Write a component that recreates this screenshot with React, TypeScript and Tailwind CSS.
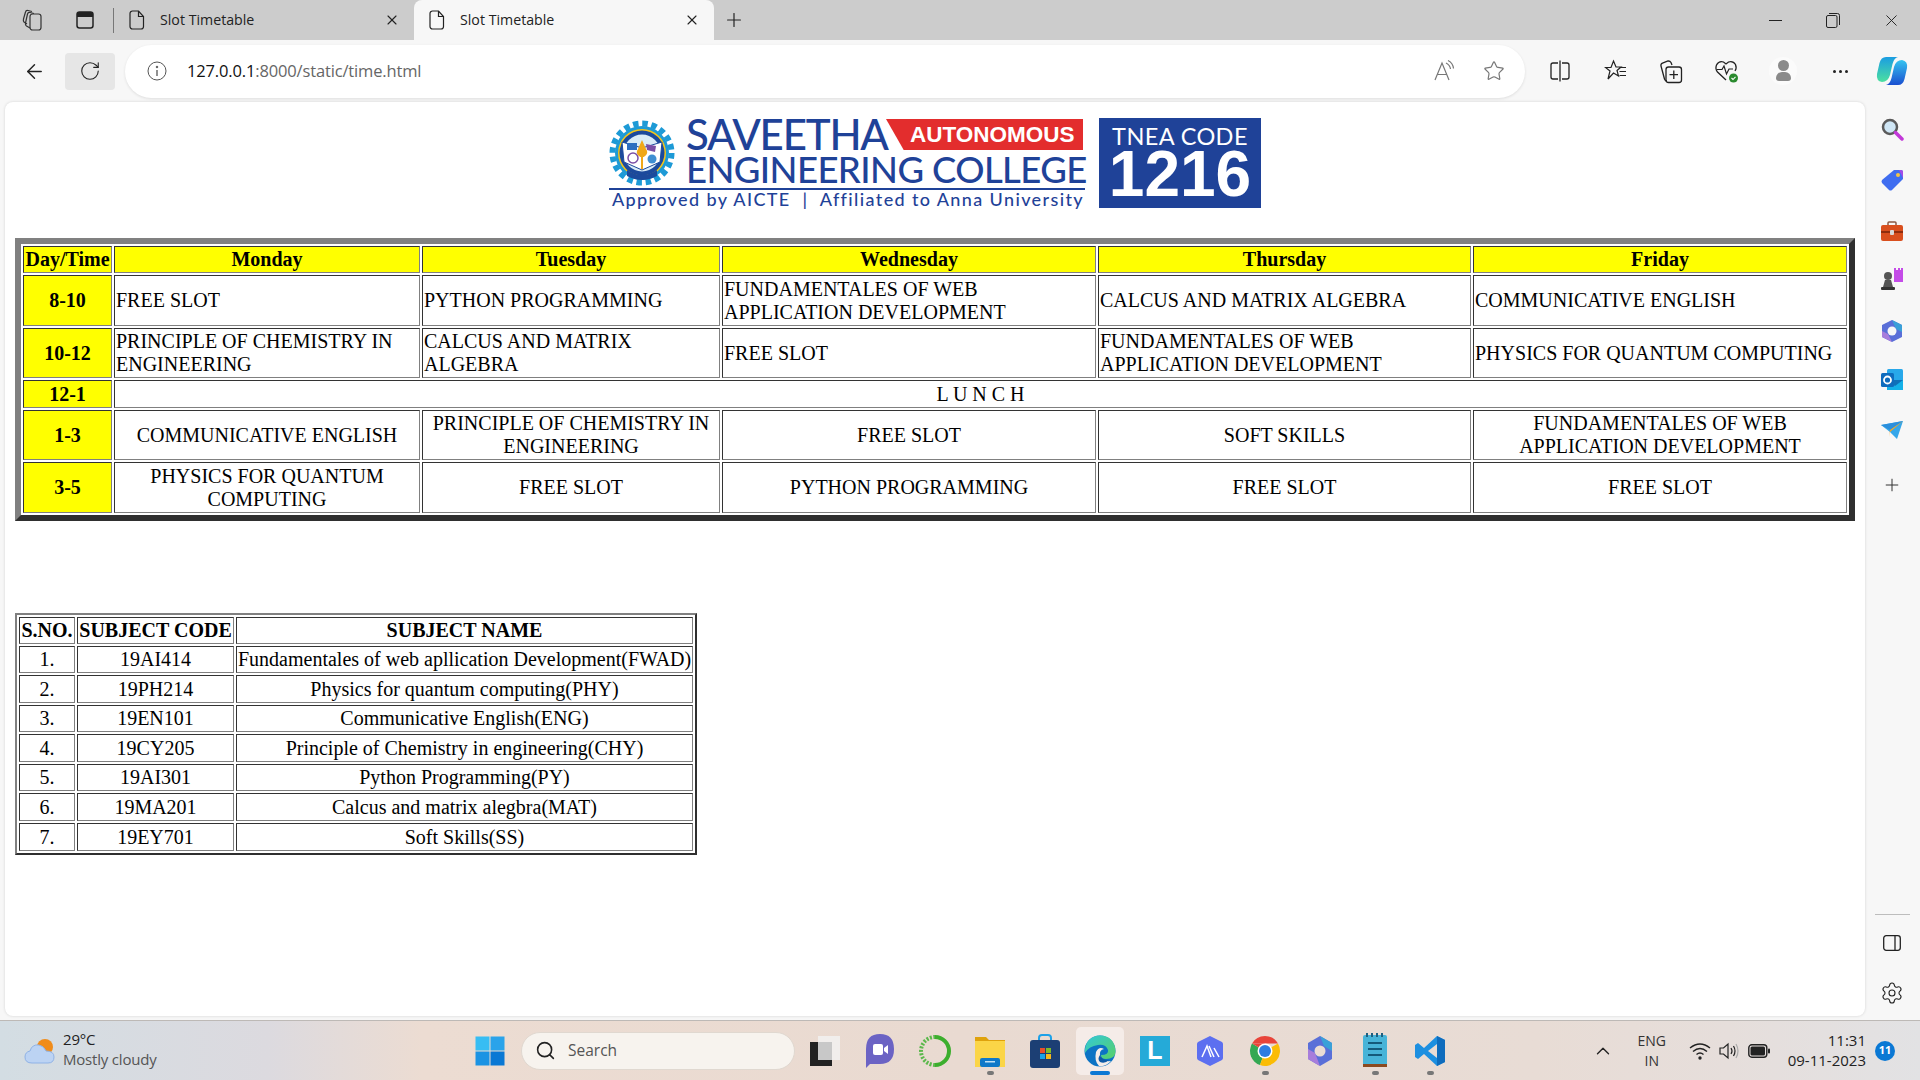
import { ArrowLeft, ChevronUp, Plus, RotateCw, Search, Settings, Star, X } from 'lucide-react';

const serif = "font-['Liberation_Serif','Times_New_Roman',serif]";
const ui = "font-['Open_Sans','Noto_Sans',sans-serif]";

interface Cell {
  text: string;
  align?: 'left' | 'center';
}

const timetable: { slot: string; height: string; cells: Cell[] }[] = [
  {
    slot: '8-10',
    height: 'h-[51px]',
    cells: [
      { text: 'FREE SLOT', align: 'left' },
      { text: 'PYTHON PROGRAMMING', align: 'left' },
      { text: 'FUNDAMENTALES OF WEB APPLICATION DEVELOPMENT', align: 'left' },
      { text: 'CALCUS AND MATRIX ALGEBRA', align: 'left' },
      { text: 'COMMUNICATIVE ENGLISH', align: 'left' },
    ],
  },
  {
    slot: '10-12',
    height: 'h-[50px]',
    cells: [
      { text: 'PRINCIPLE OF CHEMISTRY IN ENGINEERING', align: 'left' },
      { text: 'CALCUS AND MATRIX ALGEBRA', align: 'left' },
      { text: 'FREE SLOT', align: 'left' },
      { text: 'FUNDAMENTALES OF WEB APPLICATION DEVELOPMENT', align: 'left' },
      { text: 'PHYSICS FOR QUANTUM COMPUTING', align: 'left' },
    ],
  },
  {
    slot: '1-3',
    height: 'h-[50px]',
    cells: [
      { text: 'COMMUNICATIVE ENGLISH' },
      { text: 'PRINCIPLE OF CHEMISTRY IN ENGINEERING' },
      { text: 'FREE SLOT' },
      { text: 'SOFT SKILLS' },
      { text: 'FUNDAMENTALES OF WEB APPLICATION DEVELOPMENT' },
    ],
  },
  {
    slot: '3-5',
    height: 'h-[51px]',
    cells: [
      { text: 'PHYSICS FOR QUANTUM COMPUTING' },
      { text: 'FREE SLOT' },
      { text: 'PYTHON PROGRAMMING' },
      { text: 'FREE SLOT' },
      { text: 'FREE SLOT' },
    ],
  },
];

const subjects = [
  ['1.', '19AI414', 'Fundamentales of web apllication Development(FWAD)', 'h-[27px]'],
  ['2.', '19PH214', 'Physics for quantum computing(PHY)', 'h-[28px]'],
  ['3.', '19EN101', 'Communicative English(ENG)', 'h-[27px]'],
  ['4.', '19CY205', 'Principle of Chemistry in engineering(CHY)', 'h-[28px]'],
  ['5.', '19AI301', 'Python Programming(PY)', 'h-[27px]'],
  ['6.', '19MA201', 'Calcus and matrix alegbra(MAT)', 'h-[28px]'],
  ['7.', '19EY701', 'Soft Skills(SS)', 'h-[28px]'],
];

const cellBorder = 'border border-t-[#333333] border-l-[#333333] border-r-[#808080] border-b-[#808080] p-[1px]';

function DocIcon() {
  return (
    <svg width="16" height="20" viewBox="0 0 16 20" fill="none" stroke="#222" strokeWidth="1.2">
      <path d="M3.5 1h6l5 5.500V16.500a2.500 2.500 0 0 1-2.500 2.500h-8.500A2.500 2.500 0 0 1 1 16.500V3.500A2.500 2.500 0 0 1 3.500 1z" />
      <path d="M9.500 1v5.500h5" />
    </svg>
  );
}

function Tab({ active }: { active?: boolean }) {
  return (
    <div className={`flex h-10 w-[300px] items-center rounded-t-lg pl-[15px] pr-[14px] ${active ? 'bg-[#f7f7f7]' : ''}`}>
      <DocIcon />
      <span className="ml-[15px] text-[14.200px] text-[#222]">Slot Timetable</span>
      <X className="ml-auto" size={16} color="#222" strokeWidth={1.700} />
    </div>
  );
}

function Emblem() {
  return (
    <svg width="66" height="66" viewBox="0 0 66 66" className="shrink-0">
      <circle cx="33" cy="33" r="27" fill="#1d9ad6" />
      <circle cx="33" cy="33" r="29.500" fill="none" stroke="#1d9ad6" strokeWidth="6" strokeDasharray="5.500 3.770" />
      <circle cx="33" cy="33" r="24" fill="#f5c518" />
      <circle cx="33" cy="33" r="22.500" fill="#1c4a9c" />
      <circle cx="33" cy="33" r="18.500" fill="#d9ecf7" />
      <path d="M13 22 L33 28 L53 22 L51 42 L33 50 L15 42 Z" fill="#fff" stroke="#1c4a9c" strokeWidth="1" />
      <rect x="18" y="23" width="10" height="7" fill="#2d6fc0" />
      <path d="M37 24 L47 26 L46 32 L38 30 Z" fill="#7a4fa5" />
      <circle cx="24" cy="38" r="5" fill="none" stroke="#7a4fa5" strokeWidth="1.500" />
      <circle cx="43" cy="39" r="4.500" fill="#3f8fd2" />
      <path d="M33 20 L37 29 A5 5 0 1 1 29 29 Z" fill="#f0a818" />
      <rect x="32" y="34" width="2" height="15" fill="#f0a818" />
      <path d="M18 50 Q33 60 48 50 L48 56 Q33 64 18 56 Z" fill="#1c4a9c" />
    </svg>
  );
}

function Logo() {
  return (
    <div className="flex justify-center pt-4">
      <div className="flex h-[90px] w-[476px] flex-col">
        <div className="flex h-[70px] items-start">
          <div className="pt-[2px]">
            <Emblem />
          </div>
          <div className="ml-[11px] flex w-[397px] flex-col">
            <div className="flex h-[37px] items-start">
              <span className="h-[37px] w-[200px] font-['Lato',sans-serif] text-[42px] leading-[33px] font-medium tracking-[-1.200px] whitespace-nowrap text-[#1f4298]">
                SAVEETHA
              </span>
              <div className="mt-[1px] h-[31px] w-[197px] bg-[#e32d2d] pl-[24px] [clip-path:polygon(0_0,100%_0,100%_100%,9%_100%)]">
                <span className="font-['Liberation_Sans',sans-serif] text-[22.500px] leading-[31px] font-bold text-white">
                  AUTONOMOUS
                </span>
              </div>
            </div>
            <span className="font-['Lato',sans-serif] text-[36.500px] leading-[28px] font-medium tracking-[-0.600px] whitespace-nowrap text-[#1f4298]">
              ENGINEERING COLLEGE
            </span>
          </div>
        </div>
        <div className="h-[2px] bg-[#1f4298]" />
        <div className="mt-[1px] pl-[3px] font-['Lato',sans-serif] text-[18px] leading-[17px] font-medium tracking-[1.380px] whitespace-nowrap text-[#1f4298]">
          Approved by AICTE&nbsp; | &nbsp;Affiliated to Anna University
        </div>
      </div>
      <div className="ml-[14px] flex h-[90px] w-[162px] flex-col items-center bg-[#1f4298] text-white">
        <span className="mt-[5px] font-['Lato',sans-serif] text-[23.500px] leading-[26px] tracking-[0.4px] whitespace-nowrap">TNEA CODE</span>
        <span className="font-['Liberation_Sans',sans-serif] text-[64px] leading-[50px] font-bold">1216</span>
      </div>
    </div>
  );
}

function Timetable() {
  const heads = ['Monday', 'Tuesday', 'Wednesday', 'Thursday', 'Friday'];
  return (
    <table className={`ml-[10px] mt-[30px] w-[1840px] table-fixed border-separate border-spacing-[2px] border-[6px] border-t-[#808080] border-l-[#808080] border-r-[#2f2f2f] border-b-[#2f2f2f] text-[20px] leading-[23px] text-black ${serif}`}>
      <colgroup>
        <col className="w-[89px]" />
        <col className="w-[306px]" />
        <col className="w-[298px]" />
        <col className="w-[374px]" />
        <col className="w-[373px]" />
        <col className="w-[374px]" />
      </colgroup>
      <tbody>
        <tr className="h-[27px]">
          <th className={`${cellBorder} bg-[#ffff00] font-bold whitespace-nowrap`}>Day/Time</th>
          {heads.map((h) => (
            <th key={h} className={`${cellBorder} bg-[#ffff00] font-bold`}>
              {h}
            </th>
          ))}
        </tr>
        {timetable.slice(0, 2).map((row) => (
          <Row key={row.slot} slot={row.slot} height={row.height} cells={row.cells} />
        ))}
        <tr className="h-[28px]">
          <th className={`${cellBorder} bg-[#ffff00] font-bold`}>12-1</th>
          <td colSpan={5} className={`${cellBorder} text-center`}>
            L U N C H
          </td>
        </tr>
        {timetable.slice(2).map((row) => (
          <Row key={row.slot} slot={row.slot} height={row.height} cells={row.cells} />
        ))}
      </tbody>
    </table>
  );
}

function Row({ slot, height, cells }: { slot: string; height: string; cells: Cell[] }) {
  return (
    <tr className={height}>
      <th className={`${cellBorder} bg-[#ffff00] font-bold`}>{slot}</th>
      {cells.map((c, i) => (
        <td key={i} className={`${cellBorder} ${c.align === 'left' ? 'text-left' : 'text-center'}`}>
          {c.text}
        </td>
      ))}
    </tr>
  );
}

function SubjectTable() {
  return (
    <table className={`ml-[10px] mt-[92px] w-[682px] table-fixed border-separate border-spacing-[2px] border-2 border-t-[#808080] border-l-[#808080] border-r-[#2f2f2f] border-b-[#2f2f2f] text-[20px] leading-[23px] text-black ${serif}`}>
      <colgroup>
        <col className="w-[56px]" />
        <col className="w-[157px]" />
        <col className="w-[457px]" />
      </colgroup>
      <tbody>
        <tr className="h-[27px]">
          <th className={`${cellBorder} font-bold whitespace-nowrap`}>S.NO.</th>
          <th className={`${cellBorder} font-bold whitespace-nowrap`}>SUBJECT CODE</th>
          <th className={`${cellBorder} font-bold`}>SUBJECT NAME</th>
        </tr>
        {subjects.map(([no, code, name, height]) => (
          <tr key={no} className={height}>
            <td className={`${cellBorder} text-center`}>{no}</td>
            <td className={`${cellBorder} text-center`}>{code}</td>
            <td className={`${cellBorder} text-center whitespace-nowrap`}>{name}</td>
          </tr>
        ))}
      </tbody>
    </table>
  );
}

function TabStrip() {
  return (
    <div className={`flex h-10 items-center bg-[#cccccc] ${ui}`}>
      <div className="flex w-[66px] justify-center">
        <svg width="22" height="24" viewBox="0 0 22 24" fill="none" stroke="#333" strokeWidth="1.200">
          <rect x="8" y="6" width="11" height="16" rx="2.500" />
          <path d="M8 20 L4.500 18 Q3 17 3.500 15 L5.500 6 Q6 4 8 4.500 L12 5.500" />
          <path d="M5 16 L2 14 Q1 13 1.500 11 L3.500 4 Q4 2 6 2.500 L10 3.500" />
        </svg>
      </div>
      <div className="flex w-[38px] justify-center">
        <svg width="18" height="18" viewBox="0 0 18 18" fill="none">
          <rect x="1" y="1" width="16" height="16" rx="2.500" stroke="#222" strokeWidth="1.500" />
          <path d="M1 3.500 A2.500 2.500 0 0 1 3.500 1 H14.500 A2.500 2.500 0 0 1 17 3.500 V6 H1 Z" fill="#222" />
        </svg>
      </div>
      <div className="ml-[9px] h-[25px] w-px bg-[#777]" />
      <Tab />
      <Tab active />
      <div className="ml-[9px]">
        <Plus size={22} color="#222" strokeWidth={1.300} />
      </div>
      <div className="ml-auto flex items-center">
        <div className="flex w-[58px] justify-center">
          <div className="h-px w-[13px] bg-[#222]" />
        </div>
        <div className="flex w-[58px] justify-center">
          <svg width="14" height="15" viewBox="0 0 14 15" fill="none" stroke="#222" strokeWidth="1">
            <rect x="0.500" y="2.500" width="10.500" height="12" rx="1.500" />
            <path d="M3 0.500 H11.500 A2 2 0 0 1 13.500 2.500 V12" />
          </svg>
        </div>
        <div className="flex w-[58px] justify-center">
          <X size={19} color="#222" strokeWidth={1.200} />
        </div>
      </div>
    </div>
  );
}

function Toolbar() {
  return (
    <div className={`flex h-[62px] items-center bg-[#f7f7f7] ${ui}`}>
      <div className="flex w-[65px] justify-center pl-[3px]">
        <ArrowLeft size={23} color="#222" strokeWidth={1.500} />
      </div>
      <div className="flex h-[37px] w-[50px] items-center justify-center rounded-[4px] bg-[#e6e6e6]">
        <RotateCw size={22} color="#222" strokeWidth={1.200} />
      </div>
      <div className="ml-[10px] flex h-[53px] w-[1400px] items-center rounded-full bg-white pr-[20px] pl-[22px] shadow-[0_1px_3px_rgba(0,0,0,0.1)]">
        <svg width="20" height="20" viewBox="0 0 20 20" fill="none" stroke="#555" strokeWidth="1">
          <circle cx="10" cy="10" r="9" />
          <path d="M10 9 V15" strokeWidth="1.300" />
          <circle cx="10" cy="6" r="0.800" fill="#555" />
        </svg>
        <span className="ml-[20px] text-[16.500px] tracking-[-0.150px] text-[#111]">
          127.0.0.1<span className="text-[#666]">:8000/static/time.html</span>
        </span>
        <div className="ml-auto flex items-center">
          <svg width="24" height="24" viewBox="0 0 24 24" fill="none" stroke="#777" strokeWidth="1.200">
            <path d="M3 21 L10 4 L17 21 M5.500 15.500 H14.500" />
            <path d="M14 4 Q18 6 18.500 10 M16 1.500 Q21 4 21.500 9.500" />
          </svg>
          <Star className="ml-[27px]" size={22} color="#777" strokeWidth={1.300} />
        </div>
      </div>
      <div className="ml-[25px] flex items-center">
        <svg width="20" height="24" viewBox="0 0 20 24" fill="none" stroke="#222" strokeWidth="1.300">
          <path d="M8 4 H3 A2 2 0 0 0 1 6 V18 A2 2 0 0 0 3 20 H8 M12 4 H17 A2 2 0 0 1 19 6 V18 A2 2 0 0 1 17 20 H12 M10 1.500 V22.500" />
        </svg>
        <svg className="ml-[34px]" width="24" height="24" viewBox="0 0 24 24" fill="none" stroke="#222" strokeWidth="1.200">
          <path d="M9.500 2 L12 8 H17 L13 11.500 L14.500 17 L9.500 14 L4 20 L6 12 L1.500 8.500 H7 Z" />
          <path d="M16 8.500 H22 M15.500 12.500 H22 M15.500 16.500 H22" />
        </svg>
        <svg className="ml-[31px]" width="24" height="25" viewBox="0 0 24 25" fill="none" stroke="#222" strokeWidth="1.300">
          <path d="M8 22 Q6 22 5.500 20 L2 7 Q1.500 5 3.500 4.200 L9 2 Q11 1.800 12 3.500 L13 6" />
          <rect x="7" y="8" width="15.500" height="15.500" rx="2.500" />
          <path d="M14.800 11.500 V20 M10.500 15.700 H19" />
        </svg>
        <svg className="ml-[31px]" width="26" height="26" viewBox="0 0 26 26" fill="none">
          <path d="M12 22 L3.500 14 Q1 11 2.500 7 Q5 2.500 9.500 4 L12 6 L14.500 4 Q19 2.500 21.500 6.500 Q23 10 21 13" stroke="#222" strokeWidth="1.300" />
          <path d="M3 11.500 H8 L10 8 L12.500 16 L15 11 H19" stroke="#222" strokeWidth="1.200" />
          <circle cx="19.500" cy="20" r="4.500" fill="#2a8a2e" />
          <path d="M17.500 20 L19 21.500 L21.500 18.800" stroke="#fff" strokeWidth="1.100" />
        </svg>
        <div className="ml-[29px] flex h-[28px] w-[28px] flex-col items-center rounded-full bg-[#fbfbfb]">
          <div className="mt-[3px] h-[11px] w-[11px] rounded-full bg-[#8a8a8a]" />
          <div className="mt-[1px] h-[9px] w-[15px] rounded-t-[6px] rounded-b-[3px] bg-[#8a8a8a]" />
        </div>
        <div className="ml-[36px] flex gap-[3px]">
          <div className="h-[3px] w-[3px] rounded-full bg-[#222]" />
          <div className="h-[3px] w-[3px] rounded-full bg-[#222]" />
          <div className="h-[3px] w-[3px] rounded-full bg-[#222]" />
        </div>
        <svg className="ml-[28px]" width="32" height="32" viewBox="0 0 32 32">
          <defs>
            <linearGradient id="cp1" x1="0" y1="0" x2="0" y2="1">
              <stop offset="0" stopColor="#1b9de2" />
              <stop offset="1" stopColor="#4be0a0" />
            </linearGradient>
            <linearGradient id="cp2" x1="0" y1="0" x2="0" y2="1">
              <stop offset="0" stopColor="#35c4f0" />
              <stop offset="1" stopColor="#1a4fd0" />
            </linearGradient>
          </defs>
          <path d="M10 2 H22 Q18 3 16.500 9 L14 20 Q12 27 6 27 Q0 26 1 19 L3.500 8 Q5 2 10 2 Z" fill="url(#cp1)" />
          <path d="M22 30 H10 Q14 29 15.500 23 L18 12 Q20 5 26 5 Q32 6 31 13 L28.500 24 Q27 30 22 30 Z" fill="url(#cp2)" />
        </svg>
      </div>
    </div>
  );
}

function Sidebar() {
  return (
    <div className="flex w-[55px] flex-col items-center pr-[1px]">
      <svg className="mt-[15px]" width="24" height="24" viewBox="0 0 24 24" fill="none">
        <circle cx="10" cy="10" r="7" fill="#cfe6f5" stroke="#5a5a5a" strokeWidth="2.500" />
        <path d="M15.500 15.500 L22 22" stroke="#c238d8" strokeWidth="3.500" strokeLinecap="round" />
      </svg>
      <svg className="mt-[27px]" width="24" height="24" viewBox="0 0 24 24">
        <path d="M14 2 H21 Q23 2 23 4 V11 L12 22 Q10.500 23 9 22 L2 15 Q1 13.500 2 12 Z" fill="#3f6df0" />
        <path d="M19 2 H21 Q23 2 23 4 V10 Z" fill="#a44be8" />
        <circle cx="18" cy="7" r="2" fill="#f6c445" />
      </svg>
      <svg className="mt-[27px]" width="24" height="24" viewBox="0 0 24 24">
        <path d="M8 7 V4 Q8 3 9 3 H15 Q16 3 16 4 V7" fill="none" stroke="#8b5a44" strokeWidth="1.500" />
        <rect x="1" y="6" width="22" height="16" rx="2" fill="#d94f1e" />
        <rect x="1" y="12" width="22" height="2" fill="#8f2d0e" />
        <rect x="10" y="11" width="4" height="5" rx="1" fill="#d9d9d9" />
      </svg>
      <svg className="mt-[24px]" width="24" height="24" viewBox="0 0 24 24">
        <rect x="14" y="3" width="9" height="12" fill="#c44be8" />
        <path d="M14 1 H16 V3 H18 V1 H20 V3 H21 V1 H23 V6 H14 Z" fill="#c44be8" />
        <circle cx="8" cy="9" r="4" fill="#555" />
        <path d="M5 13 H11 L13 20 H3 Z" fill="#555" />
        <rect x="1" y="20" width="14" height="3" rx="1" fill="#333" />
      </svg>
      <svg className="mt-[28px]" width="24" height="24" viewBox="0 0 24 24">
        <path d="M12 1 L22 6 V18 L12 23 L2 18 V6 Z" fill="#5a6fd8" />
        <path d="M12 1 L22 6 V13 L16 10 Z" fill="#3aa0d8" />
        <path d="M2 12 L8 15 L12 23 L2 18 Z" fill="#a77ddb" />
        <circle cx="12" cy="12" r="4.500" fill="#f7f7f7" />
      </svg>
      <svg className="mt-[25px]" width="24" height="24" viewBox="0 0 24 24">
        <rect x="7" y="1" width="16" height="21" rx="1.500" fill="#28a8ea" />
        <path d="M7 12 L23 12 V22 H7 Z" fill="#14b0e8" />
        <path d="M7 12 L15 18 L23 12" fill="#0f70b8" />
        <rect x="1" y="5" width="13" height="14" rx="1.500" fill="#0f6cbd" />
        <circle cx="7.500" cy="12" r="3.500" fill="none" stroke="#fff" strokeWidth="1.800" />
      </svg>
      <svg className="mt-[28px]" width="24" height="20" viewBox="0 0 24 20">
        <path d="M1 5 L23 1 L17 19 L10 12 Z" fill="#35a7ea" />
        <path d="M1 5 L23 1 L10 10 Z" fill="#2b8fdc" />
        <path d="M10 10 L23 1 L10 12 L9 17 Z" fill="#f5a623" />
      </svg>
      <Plus className="mt-[35px]" size={20} color="#333" strokeWidth={1.200} />
      <div className="mt-[419px] h-px w-[35px] bg-[#bdbdbd]" />
      <svg className="mt-[20px]" width="18" height="16" viewBox="0 0 18 16" fill="none" stroke="#222" strokeWidth="1.300">
        <rect x="0.700" y="0.700" width="16.600" height="14.600" rx="2.500" />
        <path d="M12 0.700 V15.300" />
      </svg>
      <Settings className="mt-[30px]" size={24} color="#222" strokeWidth={1.100} />
    </div>
  );
}

function AppIcon({ children, running, active }: { children: React.ReactNode; running?: boolean; active?: boolean }) {
  return (
    <div className={`relative flex h-12 w-12 items-center justify-center rounded-[5px] ${active ? 'bg-[#f5ece8]' : ''}`}>
      {children}
      {running && <div className="absolute bottom-[0px] h-[4px] w-[7px] rounded-full bg-[#777]" />}
      {active && <div className="absolute bottom-[0px] h-[4px] w-[20px] rounded-full bg-[#0a78d4]" />}
    </div>
  );
}

function Taskbar() {
  return (
    <div className={`flex h-[60px] items-center border-t border-[#bdb9b6] bg-[linear-gradient(90deg,#d3dde3_0%,#dcdadf_14%,#ecdcd2_22%,#e9dad1_50%,#e8dcd5_80%,#e6dedb_90%,#e2e2e4_100%)] ${ui}`}>
      <div className="ml-[24px] flex w-[451px] items-center">
        <svg width="32" height="30" viewBox="0 0 32 30">
          <circle cx="21" cy="11" r="8" fill="#f08c1a" />
          <path d="M8 27 Q1 27 1 21 Q1 16 6 15 Q8 8 15 9 Q20 10 22 15 Q30 15 30 21 Q30 27 24 27 Z" fill="#bcd3f3" stroke="#8fb2e6" strokeWidth="1" />
        </svg>
        <div className="ml-[7px] mb-[4px] flex flex-col text-[15px] leading-[20px] tracking-[-0.200px]">
          <span className="text-[#222]">29°C</span>
          <span className="text-[#555]">Mostly cloudy</span>
        </div>
      </div>
      <svg width="30" height="30" viewBox="0 0 30 30">
        <rect x="0.500" y="0.500" width="14" height="14" fill="#37bdf3" />
        <rect x="15.500" y="0.500" width="14" height="14" fill="#2aa3ea" />
        <rect x="0.500" y="15.500" width="14" height="14" fill="#1b93e3" />
        <rect x="15.500" y="15.500" width="14" height="14" fill="#0a78d4" />
      </svg>
      <div className="ml-[16px] flex h-[38px] w-[274px] items-center rounded-full border border-[#e0d8d0] bg-[#f7f3ee] pl-[13px]">
        <Search size={21} color="#222" strokeWidth={1.800} />
        <span className="ml-[12px] text-[15.500px] text-[#555]">Search</span>
      </div>
      <div className="ml-[6px] flex items-center gap-[7px]">
        <AppIcon>
          <div className="relative h-[30px] w-[30px]">
            <div className="absolute bottom-0 left-0 h-[24px] w-[22px] bg-[#222]" />
            <div className="absolute top-0 right-0 h-[24px] w-[22px] bg-[#f2f2f2]/80" />
          </div>
        </AppIcon>
        <AppIcon>
          <svg width="30" height="36" viewBox="0 0 30 36">
            <path d="M15 1 Q29 1 29 16 Q29 31 15 31 H5 L1 35 V16 Q1 1 15 1 Z" fill="#6b63c4" />
            <rect x="8" y="11" width="10" height="11" rx="2" fill="#fff" />
            <path d="M19 15 L23 12 V21 L19 18 Z" fill="#fff" />
          </svg>
        </AppIcon>
        <AppIcon>
          <svg width="32" height="32" viewBox="0 0 32 32" fill="none">
            <path d="M16 2 A14 14 0 1 1 16 30" stroke="#3cae2d" strokeWidth="4" />
            <path d="M16 30 A14 14 0 0 1 16 2" stroke="#5cb84c" strokeWidth="4" strokeDasharray="2 1.500" />
          </svg>
        </AppIcon>
        <AppIcon running>
          <svg width="32" height="34" viewBox="0 0 32 34">
            <path d="M1 3 H12 L15 6 H31 V12 H1 Z" fill="#dfa20c" />
            <rect x="1" y="7" width="30" height="26" fill="#fbd547" />
            <rect x="6" y="24" width="20" height="9" rx="2" fill="#0f78c8" />
            <rect x="11" y="27" width="10" height="1.500" fill="#bfe0f5" />
          </svg>
        </AppIcon>
        <AppIcon>
          <svg width="30" height="34" viewBox="0 0 30 34">
            <path d="M9 8 V4 Q9 1 12 1 H18 Q21 1 21 4 V8" fill="none" stroke="#1da1e8" strokeWidth="2" />
            <rect x="0" y="6" width="30" height="28" rx="3" fill="#1c3f74" />
            <rect x="10" y="14" width="5" height="5" fill="#e8502a" />
            <rect x="16" y="14" width="5" height="5" fill="#7fba2a" />
            <rect x="10" y="20" width="5" height="5" fill="#19a3e8" />
            <rect x="16" y="20" width="5" height="5" fill="#f7b919" />
          </svg>
        </AppIcon>
        <AppIcon active>
          <svg width="32" height="32" viewBox="0 0 32 32">
            <defs>
              <linearGradient id="eg1" x1="0" y1="0" x2="1" y2="1">
                <stop offset="0" stopColor="#32c8d8" />
                <stop offset="1" stopColor="#58d068" />
              </linearGradient>
            </defs>
            <circle cx="16" cy="16" r="15.500" fill="#0c73c4" />
            <path d="M1 14 Q3 1 16 0.500 Q31 1 31.500 17 Q31 24 22 24 Q17 24 17 20 Q25 20 24 15 Q22 9 14 10 Q5 11 1 18 Z" fill="url(#eg1)" />
            <path d="M12 17 Q15 11 20 14 Q15 15 16 21 Q18 27 27 26 Q22 32 15 31 Q10 26 12 17 Z" fill="#f5ece8" />
            <path d="M16 20 Q17 25 25 25 Q21 29 16 27 Q13 24 16 20 Z" fill="#0d5aa7" />
          </svg>
        </AppIcon>
        <AppIcon>
          <div className="flex h-[30px] w-[30px] items-center justify-center bg-[#25aad8] font-['Liberation_Sans',sans-serif] text-[25px] leading-none font-bold text-white">
            L
          </div>
        </AppIcon>
        <AppIcon>
          <svg width="28" height="32" viewBox="0 0 28 32" fill="none">
            <path d="M14 1 L26 7 Q27 8 27 9 V23 Q27 24 26 25 L14 31 L2 25 Q1 24 1 23 V9 Q1 8 2 7 Z" fill="#5c6ff0" />
            <path d="M6 22 L11 11 L15 22 M13 11 L18 22 M18 13 L23 22" stroke="#fff" strokeWidth="1.500" />
          </svg>
        </AppIcon>
        <AppIcon running>
          <svg width="32" height="32" viewBox="0 0 32 32">
            <path d="M3 8.500 A15 15 0 0 1 29 8.500 H16 Z" fill="#e8443a" />
            <path d="M3 8.500 A15 15 0 0 0 11 30.100 L16 16 Z" fill="#34a853" />
            <path d="M29 8.500 A15 15 0 0 1 11 30.100 L16 16 Z" fill="#fbbc05" />
            <path d="M3 8.500 H16 V16 Z" fill="#e8443a" />
            <circle cx="16" cy="16" r="7.500" fill="#fff" />
            <circle cx="16" cy="16" r="6" fill="#2f7de1" />
          </svg>
        </AppIcon>
        <AppIcon>
          <svg width="28" height="32" viewBox="0 0 28 32">
            <path d="M14 1 L26 8 V24 L14 31 L2 24 V8 Z" fill="#5a6fd8" />
            <path d="M14 1 L26 8 V16 L18 11 Z" fill="#3aa0d8" />
            <path d="M2 14 L9 18 L14 31 L2 24 Z" fill="#a77ddb" />
            <circle cx="14" cy="16" r="5.500" fill="#ebdcd4" />
          </svg>
        </AppIcon>
        <AppIcon running>
          <svg width="26" height="36" viewBox="0 0 26 36">
            <rect x="1" y="2" width="24" height="31" rx="2" fill="#48b4d8" />
            <rect x="1" y="31" width="24" height="3" fill="#8b4a20" />
            <path d="M5 0 V4 M10 0 V4 M15 0 V4 M20 0 V4" stroke="#1f5f80" strokeWidth="2" />
            <path d="M6 10 H20 M6 16 H20 M6 22 H20" stroke="#155a7a" strokeWidth="2" />
          </svg>
        </AppIcon>
        <AppIcon running>
          <svg width="32" height="32" viewBox="0 0 32 32">
            <path d="M23 1 L31 5 V27 L23 31 L10 19 L4 24 L1 22 V10 L4 8 L10 13 Z" fill="#1d8fe0" />
            <path d="M23 1 L31 5 V27 L23 31 Z" fill="#0f6cbd" />
            <path d="M23 9 L14 16 L23 23 Z" fill="#ebdcd4" />
          </svg>
        </AppIcon>
      </div>
      <div className="ml-auto flex items-center">
        <ChevronUp size={22} color="#222" strokeWidth={1.500} />
        <div className="ml-[13px] flex w-[50px] flex-col items-center text-[14px] leading-[20px] text-[#333]">
          <span>ENG</span>
          <span>IN</span>
        </div>
        <svg className="ml-[12px]" width="22" height="18" viewBox="0 0 22 18" fill="none" stroke="#222" strokeWidth="1.400">
          <path d="M1 6 Q11 -2 21 6 M4 9.500 Q11 3.500 18 9.500 M7.500 12.500 Q11 9.500 14.500 12.500" />
          <circle cx="11" cy="16" r="1" fill="#222" />
        </svg>
        <svg className="ml-[8px]" width="22" height="18" viewBox="0 0 22 18" fill="none" stroke="#222" strokeWidth="1.200">
          <path d="M1 6 H4.500 L9 2 V16 L4.500 12 H1 Z" />
          <path d="M12 6 Q14 9 12 12 M14.500 4 Q17.500 9 14.500 14" />
          <path d="M17 2 Q21 9 17 16" stroke="#aaa" />
        </svg>
        <svg className="ml-[7px]" width="22" height="14" viewBox="0 0 22 14">
          <rect x="0.800" y="0.800" width="18" height="12.400" rx="3" fill="none" stroke="#222" strokeWidth="1.400" />
          <rect x="2.500" y="2.500" width="14.500" height="9" rx="1.500" fill="#222" />
          <rect x="20" y="4.500" width="2" height="5" rx="1" fill="#222" />
        </svg>
        <div className="ml-[18px] mb-[2px] flex flex-col items-end text-[15px] leading-[20px] text-[#222]">
          <span>11:31</span>
          <span className="whitespace-nowrap">09-11-2023</span>
        </div>
        <div className="mr-[25px] ml-[9px] flex h-5 w-5 items-center justify-center rounded-full bg-[#0a78d4] text-[11px] font-bold text-white">
          11
        </div>
      </div>
    </div>
  );
}

export default function App() {
  return (
    <div className="flex h-[1080px] w-[1920px] flex-col overflow-hidden bg-[#f7f7f7]">
      <TabStrip />
      <Toolbar />
      <div className="flex min-h-0 flex-1">
        <div className="ml-[5px] mb-[4px] w-[1860px] rounded-lg bg-white shadow-[0_0_3px_rgba(0,0,0,0.15)]">
          <Logo />
          <Timetable />
          <SubjectTable />
        </div>
        <Sidebar />
      </div>
      <Taskbar />
    </div>
  );
}
